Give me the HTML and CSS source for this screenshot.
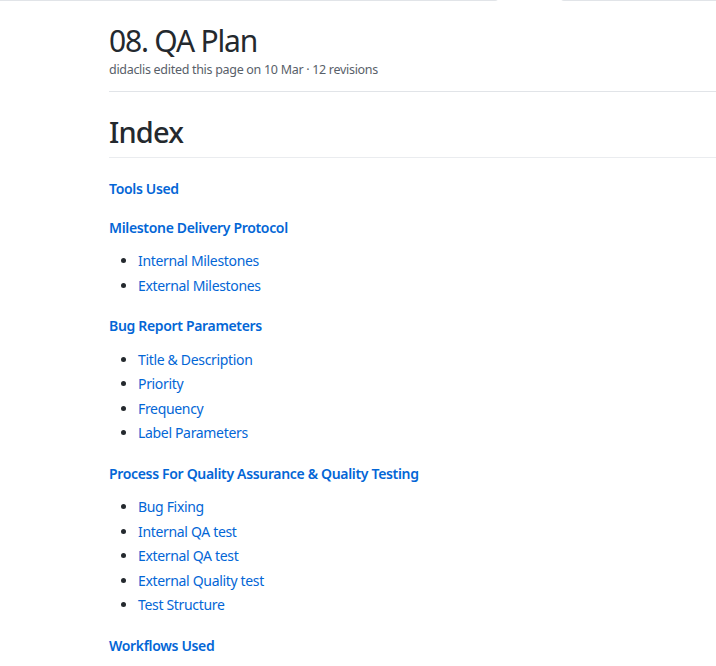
FILE: index.html
```html
<!DOCTYPE html>
<html>
<head>
<meta charset="utf-8">
<link rel="stylesheet" href="styles.css">
</head>
<body>
<div class="tabs">
  <div class="tab-line tab-left"></div>
  <div class="tab-gap"></div>
  <div class="tab-line tab-right"></div>
</div>
<main class="page">
  <header class="head">
    <h1 class="title">08. QA Plan</h1>
    <div class="meta">didaclis edited this page on 10 Mar · 12 revisions</div>
  </header>
  <article class="md">
    <h1 class="index">Index</h1>
    <p class="sec"><a href="#">Tools Used</a></p>
    <p class="sec"><a href="#">Milestone Delivery Protocol</a></p>
    <ul>
      <li><a href="#">Internal Milestones</a></li>
      <li><a href="#">External Milestones</a></li>
    </ul>
    <p class="sec"><a href="#">Bug Report Parameters</a></p>
    <ul>
      <li><a href="#">Title &amp; Description</a></li>
      <li><a href="#">Priority</a></li>
      <li><a href="#">Frequency</a></li>
      <li><a href="#">Label Parameters</a></li>
    </ul>
    <p class="sec"><a href="#">Process For Quality Assurance &amp; Quality Testing</a></p>
    <ul>
      <li><a href="#">Bug Fixing</a></li>
      <li><a href="#">Internal QA test</a></li>
      <li><a href="#">External QA test</a></li>
      <li><a href="#">External Quality test</a></li>
      <li><a href="#">Test Structure</a></li>
    </ul>
    <p class="sec"><a href="#">Workflows Used</a></p>
  </article>
</main>
</body>
</html>
```
FILE: styles.css
```css
html, body {
  margin: 0;
  padding: 0;
  background: #fff;
  overflow: hidden;
}
body {
  font-family: "Noto Sans", "Liberation Sans", sans-serif;
  color: #24292e;
  font-size: 14px;
  width: 716px;
  height: 666px;
}
.tabs {
  display: flex;
  height: 2px;
}
.tab-line {
  height: 6px;
  margin-top: -5px;
  border-bottom: 1px solid #e1e4e8;
  box-sizing: border-box;
}
.tab-left {
  width: 498px;
  border-right: 1px solid #e1e4e8;
  border-bottom-right-radius: 3px;
}
.tab-gap {
  width: 63px;
}
.tab-right {
  flex: 1;
  border-left: 1px solid #e1e4e8;
  border-bottom-left-radius: 3px;
}
.page {
  padding-left: 109px;
}
.head {
  border-bottom: 1px solid #e1e4e8;
  padding-top: 20px;
  padding-bottom: 12px;
}
.title {
  margin: 0;
  font-size: 30px;
  font-weight: 400;
  line-height: 38px;
  letter-spacing: -1.2px;
  color: #24292e;
}
.meta {
  color: #586069;
  font-size: 12.5px;
  line-height: 19px;
  letter-spacing: -0.3px;
}
.md {
  line-height: 21px;
  letter-spacing: -0.33px;
}
.index {
  margin: 20px 0 0;
  font-size: 29px;
  font-weight: 500;
  line-height: 40px;
  letter-spacing: -0.8px;
  padding-bottom: 5px;
  border-bottom: 1px solid #eaecef;
}
a {
  color: #0366d6;
  text-decoration: none;
}
.sec {
  margin: 20px 0 0;
  font-weight: 600;
}
.sec + .sec {
  margin-top: 17.5px;
}
ul {
  margin: 12.5px 0 0;
  padding-left: 29px;
}
li {
  margin-top: 3.5px;
}
li:first-child {
  margin-top: 0;
}
ul + .sec {
  margin-top: 19.5px;
}
```
